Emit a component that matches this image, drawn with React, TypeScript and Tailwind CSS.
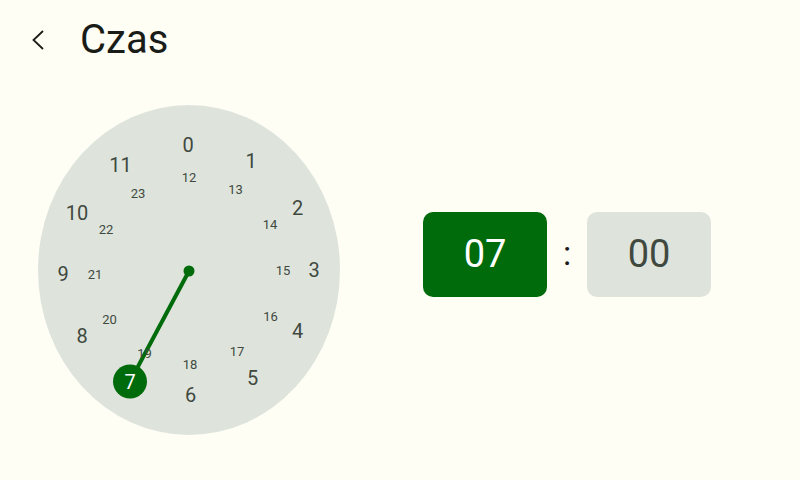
import React from "react";

const FONT = { fontFamily: "Roboto, 'Noto Sans', sans-serif" };

// dial centre, in px relative to the dial box
const CX = 151;
const CY = 166;

// label centres on the dial, hours 0-11 on the outer ring, 12-23 inside
const OUTER: [number, number][] = [
  [150, 39.5],
  [213, 56],
  [259.5, 102.5],
  [276, 165],
  [259.5, 225.5],
  [214.5, 273],
  [152.5, 289.5],
  [92, 276.5],
  [44, 231],
  [25, 169],
  [39, 108],
  [82.5, 60],
];

const INNER: [number, number][] = [
  [151, 72],
  [197.5, 84],
  [232, 118.5],
  [245, 165],
  [232.5, 210.5],
  [199, 245.5],
  [152, 258.5],
  [106.5, 247.5],
  [71.5, 214],
  [57, 168.5],
  [68, 123.5],
  [100, 87.5],
];

function ClockDial({ selected }: { selected: number }) {
  const [hx, hy] = OUTER[selected % 12];

  return (
    <div className="relative w-[302px] h-[330px] rounded-[50%] bg-[#dee4dc] shrink-0">
      <svg className="absolute inset-0" width={302} height={330}>
        <line x1={CX} y1={CY} x2={hx} y2={hy} stroke="#006b0b" strokeWidth={4} />
        <circle cx={CX} cy={CY} r={5.5} fill="#006b0b" />
        <circle cx={hx} cy={hy} r={17} fill="#006b0b" />
      </svg>
      {OUTER.map(([x, y], n) => (
        <span
          key={n}
          className={`absolute -translate-x-1/2 -translate-y-1/2 text-[20px] leading-none ${
            n === selected ? "text-white" : "text-[#41493f]"
          }`}
          style={{ left: x, top: y }}
        >
          {n}
        </span>
      ))}
      {INNER.map(([x, y], i) => (
        <span
          key={i + 12}
          className="absolute -translate-x-1/2 -translate-y-1/2 text-[13px] leading-none text-[#41493f]"
          style={{ left: x, top: y }}
        >
          {i + 12}
        </span>
      ))}
    </div>
  );
}

export default function App() {
  return (
    <div className="w-[800px] h-[480px] bg-[#fefef5] overflow-hidden" style={FONT}>
      <div className="flex items-center h-[80px] pl-[32px]">
        <button className="w-[12px] h-[20px] flex items-center">
          <svg width="12" height="20" viewBox="0 0 12 20" fill="none">
            <polyline points="11,1 1.5,10 11,19" stroke="#1a1c18" strokeWidth={1.8} />
          </svg>
        </button>
        <h1 className="ml-[36px] text-[40px] text-[#1a1c18] leading-none">Czas</h1>
      </div>

      <div className="flex items-start pl-[38px] pt-[25px]">
        <ClockDial selected={7} />
        <div className="flex items-center ml-[83px] mt-[107px]">
          <div className="w-[124px] h-[85px] rounded-[10px] bg-[#006b0b] flex items-center justify-center text-[38px] text-white">
            07
          </div>
          <div className="w-[40px] text-center text-[34px] leading-none text-[#1a1c18] pb-[4px]">:</div>
          <div className="w-[124px] h-[85px] rounded-[10px] bg-[#dee4dc] flex items-center justify-center text-[38px] text-[#41493f]">
            00
          </div>
        </div>
      </div>
    </div>
  );
}
